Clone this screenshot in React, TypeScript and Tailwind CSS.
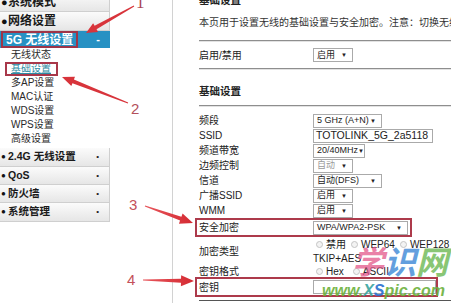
import React from 'react'

type Pt = [number, number]

// tapered annotation arrow: thin tail, wide head
const arrowPoints = (from: Pt, to: Pt, w0: number, w1: number, hl: number, hw: number) => {
    const dx = to[0] - from[0]
    const dy = to[1] - from[1]
    const len = Math.hypot(dx, dy)
    const ux = dx / len
    const uy = dy / len
    const nx = -uy
    const ny = ux
    const bx = to[0] - ux * hl
    const by = to[1] - uy * hl
    const pts: Pt[] = [
        [from[0] + nx * w0 / 2, from[1] + ny * w0 / 2],
        [bx + nx * w1 / 2, by + ny * w1 / 2],
        [bx + nx * hw / 2, by + ny * hw / 2],
        to,
        [bx - nx * hw / 2, by - ny * hw / 2],
        [bx - nx * w1 / 2, by - ny * w1 / 2],
        [from[0] - nx * w0 / 2, from[1] - ny * w0 / 2],
    ]
    return pts.map((p) => p.join(',')).join(' ')
}

const Sel = ({ text, w, disabled }: { text: string; w: string; disabled?: boolean }) => (
    <div className={`flex items-center justify-between h-[14px] border border-[#aaaaaa] bg-white pl-[3px] pr-[5px] text-[9px] leading-none whitespace-nowrap ${w} ${disabled ? 'text-[#9a9a9a]' : 'text-[#222]'}`}>
        <span>{text}</span>
        <span className="text-[6px] text-[#222]">▼</span>
    </div>
)

const Radio = () => <span className="inline-block w-[7px] h-[7px] rounded-full border border-[#c4c4c4] bg-[#f3f3f3]" />

const MainRow = ({ label, h, big }: { label: string; h: string; big?: boolean }) => (
    <div className={`flex items-center justify-between ${h} pl-[1px] pr-[10px] bg-gradient-to-b from-[#fbfbfb] to-[#e6e6e6] border-b border-r border-[#cfcfcf]`}>
        <div className="flex items-center">
            <span className={`w-[7px] text-[#111] ${big ? 'text-[11px]' : 'text-[8px]'}`}>●</span>
            <span className={`font-bold text-[#1a1a1a] ${big ? 'text-[12px]' : 'text-[10.5px]'}`}>{label}</span>
        </div>
        {!big && <span className="text-[8px] text-[#222]">•</span>}
    </div>
)

const Row = ({ label, children, h = 'h-[15px]' }: { label: string; children?: React.ReactNode; h?: string }) => (
    <div className={`flex items-center ${h}`}>
        <div className="w-[114px] text-[10px] text-[#222]">{label}</div>
        {children}
    </div>
)

const Line = () => (
    <div className="w-full">
        <div className="h-px bg-[#8e8e8e]" />
        <div className="h-px bg-[#e2e2e2]" />
    </div>
)

export default function App() {
    const subItems = ['无线状态', '基础设置', '多AP设置', 'MAC认证', 'WDS设置', 'WPS设置', '高级设置']

    return (
        <div className="relative w-[451px] h-[303px] overflow-hidden bg-white font-['Liberation_Sans','Noto_Sans_CJK_SC',sans-serif]">
            <div className="flex h-full">
                {/* Sidebar menu */}
                <div className="w-[110px] shrink-0 -mt-[7px]">
                    <MainRow label="系统模式" h="h-[19px]" big />
                    <MainRow label="网络设置" h="h-[19px]" big />
                    <div className="flex items-center justify-between h-[17px] pl-[6px] pr-[10px] bg-[#2791c3]">
                        <span className="text-[12px] font-bold text-white">5G 无线设置</span>
                        <span className="text-[11px] font-bold text-white">-</span>
                    </div>
                    <div className="flex flex-col">
                        {subItems.map((item) => (
                            <div key={item} className="flex items-center h-[14px] pl-[11px]">
                                <span className={`text-[10px] leading-none ${item === '基础设置' ? 'text-[#2f8ca3] underline' : 'text-[#2a2a2a]'}`}>{item}</span>
                            </div>
                        ))}
                    </div>
                    <div className="h-[2px]" />
                    <MainRow label="2.4G 无线设置" h="h-[19px]" />
                    <MainRow label="QoS" h="h-[18px]" />
                    <MainRow label="防火墙" h="h-[18px]" />
                    <MainRow label="系统管理" h="h-[19px]" />
                </div>

                {/* Gap column */}
                <div className="w-[62px] shrink-0" />

                {/* Content */}
                <div className="flex-1 border-l border-[#d2d2d2] pl-[26px] -mt-[8px] flex flex-col">
                    <div className="h-[18px] flex items-center text-[10.5px] font-bold text-[#222]">基础设置</div>
                    <div className="h-[24px] flex items-center text-[10px] text-[#333] whitespace-nowrap">
                        本页用于设置无线的基础设置与安全加密。注意：切换无线频段后需重新设置无线参数。
                    </div>
                    <div className="h-[6px]" />
                    <Line />
                    <Row label="启用/禁用" h="h-[26px]">
                        <Sel text="启用" w="w-[40px]" />
                    </Row>
                    <Line />
                    <div className="h-[35px] pt-[14px] text-[10.5px] font-bold text-[#222] leading-[14px]">基础设置</div>
                    <Line />
                    <div className="h-[6px]" />
                    <Row label="频段"><Sel text="5 GHz (A+N)" w="w-[69px]" /></Row>
                    <Row label="SSID">
                        <div className="flex items-center w-[120px] h-[14px] border border-[#aaaaaa] pl-[2px] text-[10.5px] text-[#222] leading-none whitespace-nowrap">TOTOLINK_5G_2a5118</div>
                    </Row>
                    <Row label="频道带宽"><Sel text="20/40MHz" w="w-[52px]" /></Row>
                    <Row label="边频控制"><Sel text="自动" w="w-[40px]" disabled /></Row>
                    <Row label="信道"><Sel text="自动(DFS)" w="w-[69px]" /></Row>
                    <Row label="广播SSID"><Sel text="启用" w="w-[40px]" /></Row>
                    <Row label="WMM"><Sel text="启用" w="w-[40px]" /></Row>
                    <div className="-ml-[4px] w-[217px] h-[19px] border-2 border-[#ad3a4b] flex items-center pl-[2px]">
                        <div className="w-[114px] text-[10px] text-[#222]">安全加密</div>
                        <Sel text="WPA/WPA2-PSK" w="w-[95px]" />
                    </div>
                    <div className="flex items-center h-[28px]">
                        <div className="w-[114px] text-[10px] text-[#222]">加密类型</div>
                        <div className="flex flex-col">
                            <div className="flex items-center h-[14px] gap-[3px] pl-[3px] text-[10px] text-[#222] whitespace-nowrap">
                                <Radio /><span className="mr-[2px]">禁用</span>
                                <Radio /><span className="mr-[2px]">WEP64</span>
                                <Radio /><span>WEP128</span>
                            </div>
                            <div className="flex items-center h-[14px] text-[10px] text-[#222]">TKIP+AES</div>
                        </div>
                    </div>
                    <Row label="密钥格式" h="h-[12px]">
                        <div className="flex items-center gap-[3px] pl-[3px] text-[10px] text-[#222]">
                            <Radio /><span className="mr-[6px]">Hex</span>
                            <Radio /><span>ASCII</span>
                        </div>
                    </Row>
                    <div className="-ml-[4px] w-[243px] h-[20px] border-2 border-[#ad3a4b] flex items-center pl-[2px]">
                        <div className="w-[114px] text-[10px] text-[#222]">密钥</div>
                        <div className="w-[123px] h-[14px] border border-[#aaaaaa] bg-white" />
                    </div>
                    <div className="h-[3px]" />
                    <div className="h-px bg-[#555]" />
                </div>
            </div>

            {/* Red annotation boxes on the menu */}
            <div className="absolute left-[1px] top-[31px] w-[77px] h-[17px] border-2 border-[#9e3548]" />
            <div className="absolute left-[5px] top-[62px] w-[53px] h-[14px] border-2 border-[#a8384a]" />

            {/* Annotation arrows */}
            <svg className="absolute inset-0 pointer-events-none" width="451" height="303">
                <defs>
                    <linearGradient id="ar" x1="0" y1="0" x2="1" y2="0">
                        <stop offset="0" stopColor="#e8565c" />
                        <stop offset="1" stopColor="#d42a32" />
                    </linearGradient>
                </defs>
                <polygon points={arrowPoints([134, 6], [86, 33], 1, 4, 11, 10)} fill="#d8343b" />
                <polygon points={arrowPoints([128, 103], [62, 77], 1, 4, 12, 10)} fill="#d8343b" />
                <polygon points={arrowPoints([145, 206], [193, 223], 1, 4, 13, 11)} fill="url(#ar)" />
                <polygon points={arrowPoints([143, 280], [194, 281], 1, 4, 13, 11)} fill="url(#ar)" />
            </svg>
            <span className="absolute left-[136px] -top-[6px] text-[17px] leading-none text-[#a94454] font-['Liberation_Serif',serif]">1</span>
            <span className="absolute left-[131px] top-[101px] text-[15px] leading-none text-[#b3505c]">2</span>
            <span className="absolute left-[129px] top-[197px] text-[15px] leading-none text-[#c4505a]">3</span>
            <span className="absolute left-[127px] top-[272px] text-[15px] leading-none text-[#c4505a]">4</span>

            {/* Watermark */}
            <div className="absolute left-[352px] top-[244px] flex text-[32px] leading-none font-bold italic opacity-75 font-['Noto_Sans_CJK_SC',sans-serif]">
                <span className="text-[#e4578a]">学</span>
                <span className="text-[#2f7fd4]">识</span>
                <span className="text-[#62b347]">网</span>
            </div>
            <div className="absolute left-[322px] top-[283px] text-[16px] leading-none font-bold italic opacity-90">
                <span className="text-[#6cb13c]">www.</span>
                <span className="text-[#3aa5a0]">X</span>
                <span className="text-[#2a6fd0]">S</span>
                <span className="text-[#6cb13c]">pic.com</span>
            </div>
        </div>
    )
}
